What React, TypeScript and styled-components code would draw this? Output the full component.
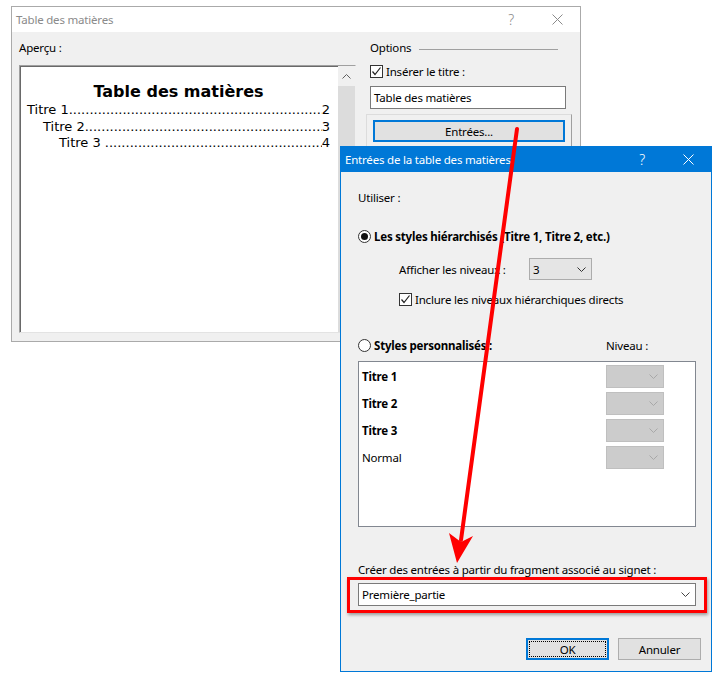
import React from 'react';
import styled, { createGlobalStyle } from 'styled-components';

const GlobalStyle = createGlobalStyle`
  html, body {
    margin: 0;
    padding: 0;
    background: #fff;
  }
  body {
    font-family: "Noto Sans", "Liberation Sans", sans-serif;
    font-size: 11.5px;
    letter-spacing: -0.2px;
    color: #000;
  }
  * { box-sizing: border-box; }
`;

const Desktop = styled.div`
  position: relative;
  width: 720px;
  height: 679px;
  overflow: hidden;
  background: #fff;
`;

const Window = styled.div<{ $active?: boolean; $left: number; $top: number; $width: number; $height: number }>`
  position: absolute;
  left: ${p => p.$left}px;
  top: ${p => p.$top}px;
  width: ${p => p.$width}px;
  height: ${p => p.$height}px;
  display: flex;
  flex-direction: column;
  background: #f0f0f0;
  border: 1px solid ${p => (p.$active ? '#0078d7' : '#aaaaaa')};
  z-index: ${p => (p.$active ? 2 : 1)};
`;

const TitleBar = styled.div<{ $active?: boolean }>`
  height: 25px;
  flex: none;
  display: flex;
  align-items: center;
  padding-left: 4px;
  background: ${p => (p.$active ? '#0078d7' : '#ffffff')};
  color: ${p => (p.$active ? '#ffffff' : '#8a8a8a')};
`;

const TitleText = styled.div`
  flex: 1;
`;

const TitleButton = styled.div<{ $color?: string }>`
  width: 46px;
  height: 100%;
  display: flex;
  align-items: center;
  justify-content: center;
  font-size: 14px;
  font-weight: 300;
  color: ${p => p.$color ?? 'inherit'};
`;

/* ---------- first dialog ---------- */

const MainLayout = styled.div`
  flex: 1;
  display: grid;
  grid-template-columns: 337px 196px;
  column-gap: 14px;
  padding: 8px 14px 8px 7px;
`;

const Column = styled.div`
  display: flex;
  flex-direction: column;
  min-width: 0;
  min-height: 0;
`;

const Label = styled.div<{ $gap?: number }>`
  line-height: 16px;
  height: 16px;
  margin-top: ${p => p.$gap ?? 0}px;
  white-space: nowrap;
`;

const PreviewBox = styled.div`
  flex: 1;
  margin-top: 9px;
  display: flex;
  min-width: 0;
  background: #fff;
  border: 1px solid;
  border-color: #a0a0a0 #f0f0f0 #e3e3e3 #a0a0a0;
  box-shadow: inset 1px 1px 0 #696969;
`;

const PreviewPage = styled.div`
  flex: 1;
  min-width: 0;
  overflow: hidden;
  padding: 16px 8px 0 7px;
  font-family: "DejaVu Sans", Verdana, sans-serif;
  font-size: 13px;
  letter-spacing: 0;
`;

const PreviewTitle = styled.div`
  font-size: 16px;
  font-weight: bold;
  line-height: 20px;
  text-align: center;
`;

const TocLine = styled.div<{ $level: number }>`
  display: flex;
  line-height: 16.5px;
  padding-left: ${p => p.$level * 16}px;
  white-space: pre;
`;

const Leader = styled.span`
  flex: 1;
  min-width: 0;
  overflow: hidden;
  &::after {
    content: '..........................................................................................................';
  }
`;

const Scrollbar = styled.div`
  width: 17px;
  flex: none;
  display: flex;
  flex-direction: column;
  background: #f0f0f0;
`;

const ScrollArrow = styled.div`
  height: 20px;
  display: flex;
  align-items: center;
  justify-content: center;
  background: #f0f0f0;
`;

const ScrollThumb = styled.div`
  flex: 1;
  background: #dcdcdc;
`;

const OptionsHeader = styled.div`
  display: flex;
  align-items: center;
  gap: 8px;
  height: 16px;
  margin-right: 8px;
  line-height: 16px;
`;

const HeaderRule = styled.div`
  flex: 1;
  height: 1px;
  margin-top: 2px;
  background: #a0a0a0;
`;

const CheckRow = styled.div<{ $gap: number; $indent?: number }>`
  display: flex;
  align-items: center;
  gap: 3px;
  height: 16px;
  margin-top: ${p => p.$gap}px;
  padding-left: ${p => p.$indent ?? 0}px;
  white-space: nowrap;
`;

const CheckBox = styled.div`
  width: 13px;
  height: 13px;
  flex: none;
  border: 1px solid #333;
  background: #fff;
  display: flex;
  align-items: center;
  justify-content: center;
`;

const TextField = styled.div`
  height: 23px;
  margin-top: 7px;
  border: 1px solid #7a7a7a;
  background: #fff;
  padding: 0 3px;
  display: flex;
  align-items: center;
`;

const ButtonFrame = styled.div`
  margin: 5px -6px 0 -4px;
  padding: 5px 6px;
  border: 1px solid;
  border-color: #dcdcdc #a0a0a0 #a0a0a0 #dcdcdc;
`;

const PushButton = styled.div<{ $default?: boolean; $width?: number }>`
  position: relative;
  width: ${p => (p.$width ? `${p.$width}px` : 'auto')};
  height: 22px;
  display: flex;
  align-items: center;
  justify-content: center;
  background: #e1e1e1;
  border: ${p => (p.$default ? '2px solid #0078d7' : '1px solid #adadad')};
`;

const FocusRing = styled.div`
  position: absolute;
  inset: 1px;
  border: 1px dotted #000;
`;

/* ---------- second dialog ---------- */

const EntriesBody = styled.div`
  flex: 1;
  display: flex;
  flex-direction: column;
  padding: 18px 15px 10px 17px;
`;

const RadioRow = styled.div<{ $gap: number }>`
  display: grid;
  grid-template-columns: 1fr 90px;
  align-items: center;
  height: 16px;
  margin-top: ${p => p.$gap}px;
  white-space: nowrap;
`;

const RadioLabel = styled.div`
  display: flex;
  align-items: center;
  gap: 3px;
  font-weight: bold;
`;

const Radio = styled.div<{ $checked?: boolean }>`
  position: relative;
  width: 13px;
  height: 13px;
  flex: none;
  border-radius: 50%;
  border: 1px solid #333;
  background: #fff;
  &::after {
    content: '';
    display: ${p => (p.$checked ? 'block' : 'none')};
    position: absolute;
    left: 2px;
    top: 2px;
    width: 7px;
    height: 7px;
    border-radius: 50%;
    background: #111;
  }
`;

const LevelRow = styled.div`
  display: grid;
  grid-template-columns: 130px 63px;
  align-items: center;
  height: 22px;
  margin-top: 14px;
  padding-left: 41px;
`;

const DropDown = styled.div<{ $variant: 'button' | 'field' | 'disabled' }>`
  height: ${p => (p.$variant === 'button' ? 22 : 23)}px;
  display: flex;
  align-items: center;
  justify-content: space-between;
  padding: 0 5px 0 3px;
  background: ${p => (p.$variant === 'field' ? '#fff' : p.$variant === 'disabled' ? '#cccccc' : '#e5e5e5')};
  border: 1px solid ${p => (p.$variant === 'field' ? '#7a7a7a' : p.$variant === 'disabled' ? '#bfbfbf' : '#acacac')};
  color: #000;
`;

const StyleList = styled.div`
  height: 166px;
  margin-top: 8px;
  padding: 1px 31px 0 3px;
  border: 1px solid #828790;
  background: #fff;
`;

const StyleRow = styled.div<{ $bold?: boolean }>`
  display: grid;
  grid-template-columns: 1fr 58px;
  align-items: center;
  height: 27px;
  font-weight: ${p => (p.$bold ? 'bold' : 'normal')};
`;

const Highlight = styled.div`
  margin: -1px -11px 0;
  padding: 3px 8px 4px;
  border: 3px solid #ff0000;
  box-shadow: 1px 2px 3px rgba(0, 0, 0, 0.35);
`;

const ButtonRow = styled.div`
  display: flex;
  justify-content: flex-end;
  gap: 9px;
  margin: 25px -5px 0 0;
`;

const Overlay = styled.svg`
  position: absolute;
  left: 0;
  top: 0;
  width: 720px;
  height: 679px;
  pointer-events: none;
  z-index: 5;
`;

function Chevron({ color = '#333', up = false }: { color?: string; up?: boolean }) {
  return (
    <svg width="9" height="5" viewBox="0 0 9 5">
      <path
        d={up ? 'M0.5 4.5 L4.5 0.5 L8.5 4.5' : 'M0.5 0.5 L4.5 4.5 L8.5 0.5'}
        fill="none"
        stroke={color}
        strokeWidth="1"
      />
    </svg>
  );
}

function Check() {
  return (
    <svg width="11" height="11" viewBox="0 0 11 11">
      <path d="M1.5 5.5 L4 8.5 L9.5 1.5" fill="none" stroke="#222" strokeWidth="1.2" />
    </svg>
  );
}

function CloseIcon({ color }: { color: string }) {
  return (
    <svg width="11" height="11" viewBox="0 0 11 11">
      <path d="M0.5 0.5 L10.5 10.5 M10.5 0.5 L0.5 10.5" stroke={color} strokeWidth="1" />
    </svg>
  );
}

const tocEntries = [
  { label: 'Titre 1', page: 2, level: 0 },
  { label: 'Titre 2', page: 3, level: 1 },
  { label: 'Titre 3 ', page: 4, level: 2 },
];

const customStyles = [
  { name: 'Titre 1', bold: true },
  { name: 'Titre 2', bold: true },
  { name: 'Titre 3', bold: true },
  { name: 'Normal', bold: false },
];

export default function App() {
  return (
    <Desktop>
      <GlobalStyle />

      <Window $left={11} $top={6} $width={570} $height={336}>
        <TitleBar>
          <TitleText>Table des matières</TitleText>
          <TitleButton $color="#8a8a8a">?</TitleButton>
          <TitleButton>
            <CloseIcon color="#8a8a8a" />
          </TitleButton>
        </TitleBar>
        <MainLayout>
          <Column>
            <Label>Aperçu :</Label>
            <PreviewBox>
              <PreviewPage>
                <PreviewTitle>Table des matières</PreviewTitle>
                {tocEntries.map(e => (
                  <TocLine key={e.label} $level={e.level}>
                    <span>{e.label}</span>
                    <Leader />
                    <span>{e.page}</span>
                  </TocLine>
                ))}
              </PreviewPage>
              <Scrollbar>
                <ScrollArrow>
                  <Chevron up color="#606060" />
                </ScrollArrow>
                <ScrollThumb />
              </Scrollbar>
            </PreviewBox>
          </Column>

          <Column>
            <OptionsHeader>
              <span>Options</span>
              <HeaderRule />
            </OptionsHeader>
            <CheckRow $gap={7}>
              <CheckBox>
                <Check />
              </CheckBox>
              <span>Insérer le titre :</span>
            </CheckRow>
            <TextField>Table des matières</TextField>
            <ButtonFrame>
              <PushButton $default>Entrées...</PushButton>
            </ButtonFrame>
          </Column>
        </MainLayout>
      </Window>

      <Window $active $left={340} $top={146} $width={372} $height={526}>
        <TitleBar $active>
          <TitleText>Entrées de la table des matières</TitleText>
          <TitleButton>?</TitleButton>
          <TitleButton>
            <CloseIcon color="#ffffff" />
          </TitleButton>
        </TitleBar>
        <EntriesBody>
          <Label>Utiliser :</Label>

          <RadioRow $gap={22}>
            <RadioLabel>
              <Radio $checked />
              <span>Les styles hiérarchisés (Titre 1, Titre 2, etc.)</span>
            </RadioLabel>
          </RadioRow>

          <LevelRow>
            <span>Afficher les niveaux :</span>
            <DropDown $variant="button">
              <span>3</span>
              <Chevron />
            </DropDown>
          </LevelRow>

          <CheckRow $gap={11} $indent={41}>
            <CheckBox>
              <Check />
            </CheckBox>
            <span>Inclure les niveaux hiérarchiques directs</span>
          </CheckRow>

          <RadioRow $gap={30}>
            <RadioLabel>
              <Radio />
              <span>Styles personnalisés :</span>
            </RadioLabel>
            <span>Niveau :</span>
          </RadioRow>

          <StyleList>
            {customStyles.map(s => (
              <StyleRow key={s.name} $bold={s.bold}>
                <span>{s.name}</span>
                <DropDown $variant="disabled">
                  <span />
                  <Chevron color="#a8a8a8" />
                </DropDown>
              </StyleRow>
            ))}
          </StyleList>

          <Label $gap={35}>Créer des entrées à partir du fragment associé au signet :</Label>
          <Highlight>
            <DropDown $variant="field">
              <span>Première_partie</span>
              <Chevron color="#444" />
            </DropDown>
          </Highlight>

          <ButtonRow>
            <PushButton $default $width={83}>
              <FocusRing />
              OK
            </PushButton>
            <PushButton $width={83}>Annuler</PushButton>
          </ButtonRow>
        </EntriesBody>
      </Window>

      <Overlay viewBox="0 0 720 679">
        <line x1="517" y1="129" x2="461" y2="540" stroke="#ff0000" strokeWidth="4" strokeLinecap="round" />
        <polygon points="457,563 449,533 461,542 473,536" fill="#ff0000" />
      </Overlay>
    </Desktop>
  );
}
